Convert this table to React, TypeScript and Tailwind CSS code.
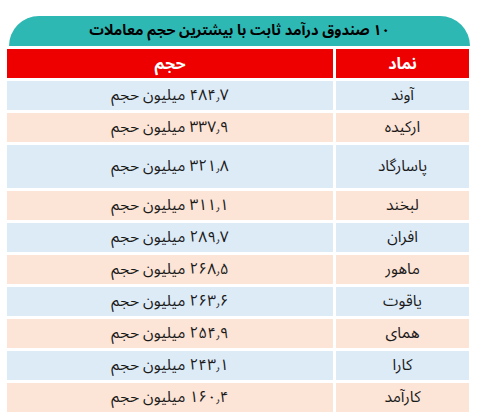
import React from 'react'

const rows = [
  { symbol: 'آوند', volume: '۴۸۴٫۷', tall: false },
  { symbol: 'ارکیده', volume: '۳۳۷٫۹', tall: false },
  { symbol: 'پاسارگاد', volume: '۳۲۱٫۸', tall: true },
  { symbol: 'لبخند', volume: '۳۱۱٫۱', tall: false },
  { symbol: 'افران', volume: '۲۸۹٫۷', tall: false },
  { symbol: 'ماهور', volume: '۲۶۸٫۵', tall: false },
  { symbol: 'یاقوت', volume: '۲۶۳٫۶', tall: false },
  { symbol: 'همای', volume: '۲۵۴٫۹', tall: false },
  { symbol: 'کارا', volume: '۲۴۳٫۱', tall: false },
  { symbol: 'کارآمد', volume: '۱۶۰٫۴', tall: false },
]

export default function App() {
  return (
    <div
      dir="rtl"
      className="w-[478px] h-[418px] bg-white pt-[16px] pl-[7px] pr-[9px]"
      style={{ fontFamily: '"Noto Sans Arabic", "Vazirmatn", "Noto Naskh Arabic", "DejaVu Sans", sans-serif' }}
    >
      {/* Title */}
      <div className="ml-[2px] -mr-[1px] h-[30px] rounded-t-[30px] bg-[#2eb8b4] flex items-center justify-center text-[14.5px] font-bold text-black">
        ۱۰ صندوق درآمد ثابت با بیشترین حجم معاملات
      </div>

      {/* Table */}
      <div className="mt-[3px] grid grid-cols-[133px_326px] gap-x-[3px] gap-y-[3px]">
        <div className="h-[29px] bg-[#ee0000] text-white font-bold text-[16px] flex items-center justify-center">
          نماد
        </div>
        <div className="h-[29px] bg-[#ee0000] text-white font-bold text-[16px] flex items-center justify-center">
          حجم
        </div>
        {rows.map((r, i) => {
          const bg = i % 2 === 0 ? 'bg-[#ddebf7]' : 'bg-[#fce4d6]'
          const h = r.tall ? 'h-[43px]' : 'h-[29px]'
          return (
            <React.Fragment key={r.symbol}>
              <div className={`${h} ${bg} flex items-center justify-center text-[15.5px] text-[#1a1a1a]`}>
                {r.symbol}
              </div>
              <div className={`${h} ${bg} flex items-center justify-center text-[15.5px] text-[#1a1a1a]`}>
                {r.volume} میلیون حجم
              </div>
            </React.Fragment>
          )
        })}
      </div>
    </div>
  )
}
